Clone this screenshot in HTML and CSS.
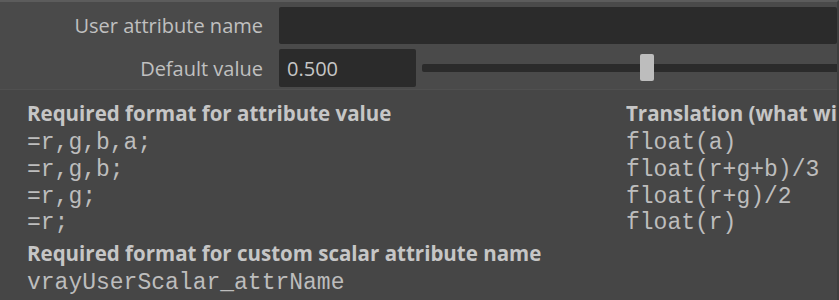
FILE: index.html
```html
<!DOCTYPE html>
<html lang="en">
<head>
    <meta charset="UTF-8">
    <meta name="viewport" content="width=device-width, initial-scale=1.0">
    <title>User Scalar</title>
    <link rel="stylesheet" href="styles.css">
</head>
<body>
    <div class="panel">
        <div class="form">
            <div class="row">
                <label class="label">User attribute name</label>
                <div class="field field-wide"></div>
            </div>
            <div class="row row-value">
                <label class="label">Default value</label>
                <div class="field field-num">0.500</div>
                <div class="slider">
                    <div class="track"></div>
                    <div class="handle" style="left: 218px"></div>
                </div>
            </div>
        </div>
        <div class="help">
            <div class="head">Required format for attribute value</div>
            <div class="head">Translation (what will be used)</div>
            <div class="mono">=r,g,b,a;</div>
            <div class="mono">float(a)</div>
            <div class="mono">=r,g,b;</div>
            <div class="mono">float(r+g+b)/3</div>
            <div class="mono">=r,g;</div>
            <div class="mono">float(r+g)/2</div>
            <div class="mono">=r;</div>
            <div class="mono">float(r)</div>
            <div class="head head-gap span">Required format for custom scalar attribute name</div>
            <div class="mono span">vrayUserScalar_attrName</div>
        </div>
    </div>
</body>
</html>
```

FILE: styles.css
```css
body {
    margin: 0;
    padding: 0;
    background-color: #464646;
    font-family: "Open Sans", "Noto Sans", sans-serif;
    overflow: hidden;
}
.panel {
    width: 839px;
    height: 300px;
    border-top: 2px solid #5c5c5c;
    border-right: 2px solid #3e3e3e;
    box-sizing: border-box;
    overflow: hidden;
}
.form {
    background: #4a4a4a;
    padding: 5px 0 2px 0;
    border-bottom: 1px solid #505050;
    display: flex;
    flex-direction: column;
    gap: 5px;
}
.row {
    display: flex;
    align-items: center;
    height: 37px;
}
.row-value {
    height: 38px;
}
.label {
    width: 263px;
    margin-right: 16px;
    text-align: right;
    font-size: 20px;
    color: #c0c0c0;
    flex-shrink: 0;
}
.field {
    background: #2b2b2b;
    border-radius: 2px;
    height: 100%;
    box-sizing: border-box;
}
.field-wide {
    flex: 1;
}
.field-num {
    width: 137px;
    padding-left: 8px;
    font-size: 20px;
    color: #c6c6c6;
    display: flex;
    align-items: center;
}
.slider {
    position: relative;
    flex: 1;
    margin-left: 6px;
    height: 100%;
    display: flex;
    align-items: center;
}
.track {
    width: 100%;
    height: 8px;
    background: #2b2b2b;
    border-radius: 2px 0 0 2px;
}
.handle {
    position: absolute;
    top: 5px;
    width: 14px;
    height: 27px;
    background: #bdbdbd;
    border-radius: 2px;
}
.help {
    display: grid;
    grid-template-columns: 599px 1fr;
    padding: 8px 0 0 27px;
    white-space: nowrap;
}
.head {
    font-weight: bold;
    font-size: 20.5px;
    line-height: 31px;
    margin-bottom: 1px;
    color: #c6c6c6;
    overflow: hidden;
}
.head-gap {
    margin-top: 1px;
}
.span {
    grid-column: 1 / 3;
}
.mono {
    font-family: "Liberation Mono", "Courier New", monospace;
    font-size: 23px;
    line-height: 26.8px;
    color: #bdbdbd;
}
```
